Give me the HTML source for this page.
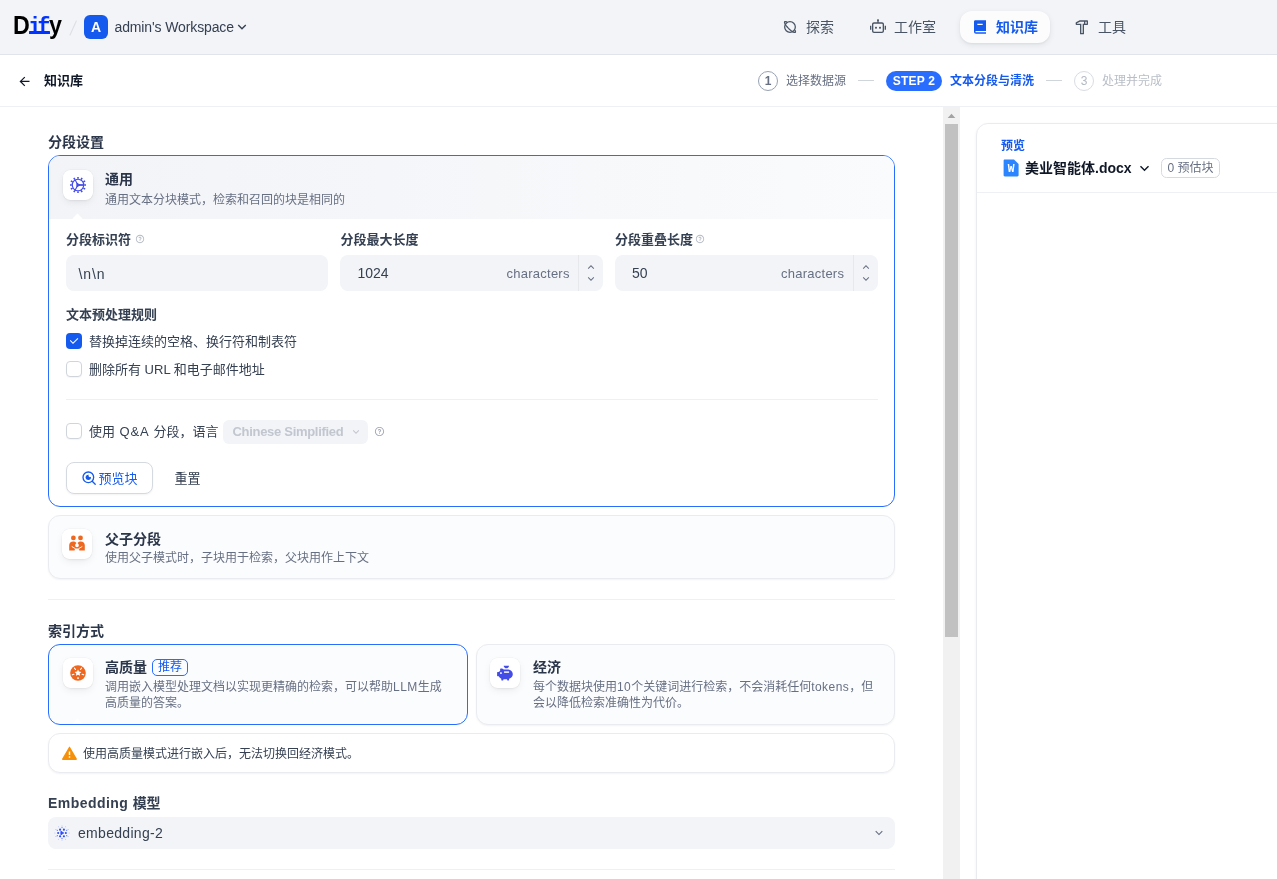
<!DOCTYPE html>
<html lang="zh-CN">
<head>
<meta charset="utf-8">
<title>Dify</title>
<style>
*{box-sizing:border-box;margin:0;padding:0}
html,body{width:1277px;height:879px;overflow:hidden;background:#fff}
body{font-family:"Liberation Sans","Noto Sans CJK SC",sans-serif;color:#101828;position:relative;-webkit-font-smoothing:antialiased}
.abs{position:absolute}
.t{position:absolute;white-space:nowrap}
svg{display:block;position:absolute}
/* header */
#hdr{left:0;top:0;width:1277px;height:55px;background:#f2f4f7;border-bottom:1px solid #e1e4ea}
#sub{left:0;top:55px;width:1277px;height:52px;background:#fff;border-bottom:1px solid #eef0f3}
.logo{left:13px;top:8.500px;height:32px;line-height:32px;font-size:25px;font-weight:700;color:#000;transform:scaleX(.93);transform-origin:0 0}
.logo .if{font-family:"Liberation Mono",monospace;color:#0033ff;font-size:23px;letter-spacing:-3.7px;margin:0 2.2px 0 -1.8px}
.avatar{left:84px;top:15px;width:24px;height:24px;border-radius:6px;background:#155aef;color:#fff;font-size:14px;font-weight:700;line-height:24px;text-align:center}
.nav{font-size:14px;line-height:20px;color:#495464;top:17px}
.pill{left:960px;top:11px;width:90px;height:32px;border-radius:12px;background:#fcfcfd;box-shadow:0 2px 6px rgba(16,24,40,.08),0 1px 2px rgba(16,24,40,.05)}
/* stepper */
.circ{width:20px;height:20px;border-radius:50%;border:1px solid #98a2b2;font-size:12px;font-weight:700;line-height:18px;text-align:center;top:71px}
.st{font-size:12px;line-height:20px;top:71px}
.dash{height:1px;width:16px;top:80px;background:#d0d5dc}
/* cards */
.card{border-radius:12px}
.ibox{width:30px;height:30px;border-radius:7.500px;background:#fff;box-shadow:0 0 0 .5px rgba(16,24,40,.05),0 3px 10px -2px rgba(9,9,11,.09),0 2px 4px -2px rgba(9,9,11,.07)}
.h14{font-size:14px;font-weight:700;line-height:20px;color:#2b364a}
.d12{font-size:12px;line-height:16px;color:#676f83}
.lab{font-size:13px;font-weight:700;line-height:16px;color:#354052}
.inp{height:36px;border-radius:8px;background:#f2f4f7}
.cb{width:16px;height:16px;border-radius:4px;left:66px}
.cb.off{background:#fff;border:1px solid #d0d5dc;box-shadow:0 1px 1px rgba(16,24,40,.04)}
.cb.on{background:#155aef}
.cl{font-size:13px;line-height:20px;color:#354052;left:89px}
.hr{height:1px;background:#eef0f3}
</style>
</head>
<body>
<div id="root" style="position:absolute;left:0;top:0;width:1277px;height:879px;will-change:transform;overflow:hidden">
<!-- ============ HEADER ============ -->
<div id="hdr" class="abs"></div>
<div id="sub" class="abs"></div>

<div class="t logo">D<span class="if">if</span>y</div>
<div class="abs" style="left:29px;top:31px;width:20.500px;height:2.500px;background:#0033ff;border-radius:.5px"></div>
<svg style="left:68px;top:19px" width="10" height="18" viewBox="0 0 10 18"><path d="M8.3 2L2 16" stroke="#dcdfe5" stroke-width="1.1" stroke-linecap="round" fill="none"/></svg>
<div class="abs avatar">A</div>
<div class="t" style="left:114.500px;top:17px;font-size:14px;line-height:20px;color:#354052;letter-spacing:-.12px">admin's Workspace</div>
<svg style="left:234px;top:19px" width="16" height="16" viewBox="0 0 24 24"><path fill="#354052" d="M11.9999 13.1714L16.9497 8.22168L18.3639 9.63589L11.9999 15.9999L5.63599 9.63589L7.0502 8.22168L11.9999 13.1714Z"/></svg>

<!-- nav -->
<div class="abs pill"></div>
<svg id="ic-explore" style="left:782px;top:18.600px" width="16" height="16" viewBox="0 0 24 24" fill="none" stroke="#495464" stroke-width="1.900" stroke-linejoin="round" stroke-linecap="round"><circle cx="12" cy="12" r="8"/><path d="M19.65 17.16 L19.92 17.80 L20.10 18.37 L20.19 18.88 L20.19 19.31 L20.10 19.65 L19.92 19.92 L19.65 20.10 L19.31 20.19 L18.88 20.19 L18.37 20.10 L17.80 19.92 L17.16 19.65 L16.47 19.30 L15.72 18.88 L14.94 18.37 L14.12 17.80 L13.28 17.16 L12.43 16.46 L11.57 15.72 L10.72 14.94 L9.88 14.12 L9.06 13.28 L8.28 12.43 L7.54 11.57 L6.84 10.72 L6.20 9.88 L5.63 9.06 L5.12 8.28 L4.70 7.53 L4.35 6.84 L4.08 6.20 L3.90 5.63 L3.81 5.12 L3.81 4.69 L3.90 4.35 L4.08 4.08 L4.35 3.90 L4.69 3.81 L5.12 3.81 L5.63 3.90 L6.20 4.08 L6.84 4.35"/></svg>
<div class="t nav" style="left:806px">探索</div>
<svg id="ic-robot" style="left:870px;top:18.800px" width="16" height="16" viewBox="0 0 24 24"><path fill="#495464" d="M13.5 2C13.5 2.44425 13.3069 2.84339 13 3.11805V5H18C19.6569 5 21 6.34315 21 8V18C21 19.6569 19.6569 21 18 21H6C4.34315 21 3 19.6569 3 18V8C3 6.34315 4.34315 5 6 5H11V3.11805C10.6931 2.84339 10.5 2.44425 10.5 2C10.5 1.17157 11.1716 0.5 12 0.5C12.8284 0.5 13.5 1.17157 13.5 2ZM6 7C5.44772 7 5 7.44772 5 8V18C5 18.5523 5.44772 19 6 19H18C18.5523 19 19 18.5523 19 18V8C19 7.44772 18.5523 7 18 7H13H11H6ZM2 10H0V16H2V10ZM22 10H24V16H22V10ZM9 14.5C9.82843 14.5 10.5 13.8284 10.5 13C10.5 12.1716 9.82843 11.5 9 11.5C8.17157 11.5 7.5 12.1716 7.5 13C7.5 13.8284 8.17157 14.5 9 14.5ZM15 14.5C15.8284 14.5 16.5 13.8284 16.5 13C16.5 12.1716 15.8284 11.5 15 11.5C14.1716 11.5 13.5 12.1716 13.5 13C13.5 13.8284 14.1716 14.5 15 14.5Z"/></svg>
<div class="t nav" style="left:894px">工作室</div>
<svg id="ic-book" style="left:972px;top:19px" width="16" height="16" viewBox="0 0 24 24"><path fill="#155aef" d="M21 18H6C5.44772 18 5 18.4477 5 19C5 19.5523 5.44772 20 6 20H21V22H6C4.34315 22 3 20.6569 3 19V4C3 2.89543 3.89543 2 5 2H21V18ZM16 9V7H8V9H16Z"/></svg>
<div class="t nav" style="left:996px;color:#155aef;font-weight:700">知识库</div>
<svg id="ic-hammer" style="left:1074px;top:19px" width="16" height="16" viewBox="0 0 24 24"><path fill="#495464" d="M20 2C20.5523 2 21 2.44772 21 3V8C21 8.55228 20.5523 9 20 9H15V22C15 22.5523 14.5523 23 14 23H10C9.44772 23 9 22.5523 9 22V9H3.5C2.94772 9 2.5 8.55228 2.5 8V5.61803C2.5 5.23926 2.714 4.893 3.05279 4.72361L8.5 2H20ZM15 4H8.97214L4.5 6.23607V7H11V21H13V7H15V4ZM19 4H17V7H19V4Z"/></svg>
<div class="t nav" style="left:1098px">工具</div>

<!-- sub header -->
<svg style="left:16.500px;top:74px" width="15" height="15" viewBox="0 0 24 24"><path fill="#101828" d="M7.82843 10.9999H20V12.9999H7.82843L13.1924 18.3638L11.7782 19.778L4 11.9999L11.7782 4.22168L13.1924 5.63589L7.82843 10.9999Z"/></svg>
<div class="t" style="left:44px;top:71px;font-size:13px;font-weight:700;line-height:20px;color:#101828">知识库</div>

<div class="abs circ" style="left:758px;color:#676f83">1</div>
<div class="t st" style="left:786px;color:#676f83">选择数据源</div>
<div class="abs dash" style="left:858px"></div>
<div class="abs" style="left:886px;top:71px;width:56px;height:20px;border-radius:10px;background:#296dff;color:#fff;font-size:12px;font-weight:700;line-height:20px;text-align:center;letter-spacing:.2px">STEP 2</div>
<div class="t st" style="left:950px;color:#155aef;font-weight:700">文本分段与清洗</div>
<div class="abs dash" style="left:1046px"></div>
<div class="abs circ" style="left:1074px;color:#b3b8c2;border-color:#d9dce2;font-weight:400">3</div>
<div class="t st" style="left:1102px;color:#b9bec7">处理并完成</div>


<!-- ============ LEFT PANEL ============ -->
<div class="t" style="left:48px;top:131.700px;font-size:14px;font-weight:700;line-height:20px;color:#2b364a">分段设置</div>

<!-- general card -->
<div class="abs card" id="c1" style="left:48px;top:155px;width:847px;height:352px;border:1.500px solid #296dff;background:#fff;overflow:hidden">
  <div class="abs" style="left:0;top:0;width:100%;height:62.500px;background:linear-gradient(90deg,#f2f4f7 0%,#f5f6f9 40%,#fafbfc 100%)"></div>
  <div class="abs" style="left:24.800px;top:59px;width:7px;height:7px;background:#fff;transform:rotate(45deg)"></div>
</div>
<div class="abs ibox" style="left:63px;top:170px"></div>
<svg id="ic-general" style="left:70px;top:176.800px" width="16" height="16" viewBox="0 0 16 16" fill="none" stroke="#444ce7">
  <circle cx="8" cy="8" r="5.750" stroke-width="1.200"/>
  <path d="M14.20 8.00L16.25 8.00M13.37 11.10L15.14 12.12M11.10 13.37L12.12 15.14M8.00 14.20L8.00 16.25M4.90 13.37L3.88 15.14M2.63 11.10L0.86 12.12M1.80 8.00L-0.25 8.00M2.63 4.90L0.86 3.87M4.90 2.63L3.87 0.86M8.00 1.80L8.00 -0.25M11.10 2.63L12.12 0.86M13.37 4.90L15.14 3.87" stroke-width="1.550"/>
  <path d="M8 8L13.70 8.00M8 8L5.15 12.94M8 8L5.15 3.06" stroke-width="1.150"/>
  <path d="M6.900 6.200L10 8L6.900 9.800Z" fill="#444ce7" stroke-width="1" stroke-linejoin="round"/><path d="M9 8H13.700" stroke-width="1.500"/>
</svg>
<div class="t h14" style="left:105px;top:169px">通用</div>
<div class="t d12" style="left:105px;top:192px">通用文本分块模式，检索和召回的块是相同的</div>

<div class="t lab" style="left:66px;top:231.700px">分段标识符</div>
<svg class="q" style="left:135px;top:234px" width="10" height="10" viewBox="0 0 24 24"><path fill="#b4b9c4" d="M12 22C6.47715 22 2 17.5228 2 12C2 6.47715 6.47715 2 12 2C17.5228 2 22 6.47715 22 12C22 17.5228 17.5228 22 12 22ZM12 20C16.4183 20 20 16.4183 20 12C20 7.58172 16.4183 4 12 4C7.58172 4 4 7.58172 4 12C4 16.4183 7.58172 20 12 20ZM11 15H13V17H11V15ZM13 13.3551V14H11V12.5C11 11.9477 11.4477 11.5 12 11.5C12.8284 11.5 13.5 10.8284 13.5 10C13.5 9.17157 12.8284 8.5 12 8.5C11.2723 8.5 10.6656 9.01823 10.5288 9.70577L8.56731 9.31346C8.88637 7.70919 10.302 6.5 12 6.500C13.933 6.500 15.500 8.067 15.500 10C15.500 11.5855 14.4457 12.9248 13 13.3551Z"/></svg>
<div class="t lab" style="left:340.500px;top:231.700px">分段最大长度</div>
<div class="t lab" style="left:615px;top:231.700px">分段重叠长度</div>
<svg class="q" style="left:695px;top:234px" width="10" height="10" viewBox="0 0 24 24"><path fill="#b4b9c4" d="M12 22C6.47715 22 2 17.5228 2 12C2 6.47715 6.47715 2 12 2C17.5228 2 22 6.47715 22 12C22 17.5228 17.5228 22 12 22ZM12 20C16.4183 20 20 16.4183 20 12C20 7.58172 16.4183 4 12 4C7.58172 4 4 7.58172 4 12C4 16.4183 7.58172 20 12 20ZM11 15H13V17H11V15ZM13 13.3551V14H11V12.5C11 11.9477 11.4477 11.5 12 11.5C12.8284 11.5 13.5 10.8284 13.5 10C13.5 9.17157 12.8284 8.5 12 8.5C11.2723 8.5 10.6656 9.01823 10.5288 9.70577L8.56731 9.31346C8.88637 7.70919 10.302 6.5 12 6.500C13.933 6.500 15.500 8.067 15.500 10C15.500 11.5855 14.4457 12.9248 13 13.3551Z"/></svg>

<div class="abs inp" style="left:66px;top:255px;width:262px"></div>
<div class="t" style="left:78.500px;top:264px;font-size:14px;line-height:20px;color:#354052;letter-spacing:.9px">\n\n</div>

<div class="abs inp" style="left:340px;top:255px;width:263px"></div>
<div class="t" style="left:357.500px;top:262.600px;font-size:14px;line-height:20px;color:#354052">1024</div>
<div class="t" style="left:506.500px;top:263.800px;font-size:13px;line-height:20px;color:#676f83;letter-spacing:.25px">characters</div>
<div class="abs" style="left:578px;top:255px;width:1px;height:36px;background:#e6e8ec"></div>
<svg style="left:585px;top:261px" width="12" height="12" viewBox="0 0 24 24"><path fill="#676f83" d="M11.9999 10.8284L7.0502 15.7782L5.63599 14.364L11.9999 8L18.3639 14.364L16.9497 15.7782L11.9999 10.8284Z"/></svg>
<svg style="left:585px;top:272.800px" width="12" height="12" viewBox="0 0 24 24"><path fill="#676f83" d="M11.9999 13.1714L16.9497 8.22168L18.3639 9.63589L11.9999 15.9999L5.63599 9.63589L7.0502 8.22168L11.9999 13.1714Z"/></svg>

<div class="abs inp" style="left:615px;top:255px;width:263px"></div>
<div class="t" style="left:632px;top:262.600px;font-size:14px;line-height:20px;color:#354052">50</div>
<div class="t" style="left:781px;top:263.800px;font-size:13px;line-height:20px;color:#676f83;letter-spacing:.25px">characters</div>
<div class="abs" style="left:853px;top:255px;width:1px;height:36px;background:#e6e8ec"></div>
<svg style="left:860px;top:261px" width="12" height="12" viewBox="0 0 24 24"><path fill="#676f83" d="M11.9999 10.8284L7.0502 15.7782L5.63599 14.364L11.9999 8L18.3639 14.364L16.9497 15.7782L11.9999 10.8284Z"/></svg>
<svg style="left:860px;top:272.800px" width="12" height="12" viewBox="0 0 24 24"><path fill="#676f83" d="M11.9999 13.1714L16.9497 8.22168L18.3639 9.63589L11.9999 15.9999L5.63599 9.63589L7.0502 8.22168L11.9999 13.1714Z"/></svg>

<div class="t lab" style="left:66px;top:307px">文本预处理规则</div>
<div class="abs cb on" style="top:333px"></div>
<svg style="left:68px;top:335px" width="12" height="12" viewBox="0 0 24 24"><path fill="#fff" d="M9.9997 15.1709L19.1921 5.97852L20.6063 7.39273L9.9997 17.9993L3.63574 11.6354L5.04996 10.2212L9.9997 15.1709Z"/></svg>
<div class="t cl" style="top:331.500px">替换掉连续的空格、换行符和制表符</div>
<div class="abs cb off" style="top:361px"></div>
<div class="t cl" style="top:359.500px">删除所有 URL 和电子邮件地址</div>
<div class="abs hr" style="left:66px;top:399px;width:812px"></div>

<div class="abs cb off" style="top:423px"></div>
<div class="t cl" style="top:421.500px">使用<span style="letter-spacing:.9px"> Q&amp;A </span>分段，语言</div>
<div class="abs" style="left:223px;top:420px;width:145px;height:23.500px;border-radius:6px;background:#f2f4f7"></div>
<div class="t" style="left:232.500px;top:422px;font-size:13px;font-weight:700;line-height:20px;color:#c2c6cf;letter-spacing:-.3px">Chinese Simplified</div>
<svg style="left:349.500px;top:425.500px" width="12" height="12" viewBox="0 0 24 24"><path fill="#c2c6cf" d="M11.9999 13.1714L16.9497 8.22168L18.3639 9.63589L11.9999 15.9999L5.63599 9.63589L7.0502 8.22168L11.9999 13.1714Z"/></svg>
<svg class="q" style="left:373.500px;top:426px" width="11" height="11" viewBox="0 0 24 24"><path fill="#a3a9b6" d="M12 22C6.47715 22 2 17.5228 2 12C2 6.47715 6.47715 2 12 2C17.5228 2 22 6.47715 22 12C22 17.5228 17.5228 22 12 22ZM12 20C16.4183 20 20 16.4183 20 12C20 7.58172 16.4183 4 12 4C7.58172 4 4 7.58172 4 12C4 16.4183 7.58172 20 12 20ZM11 15H13V17H11V15ZM13 13.3551V14H11V12.5C11 11.9477 11.4477 11.5 12 11.5C12.8284 11.5 13.5 10.8284 13.5 10C13.5 9.17157 12.8284 8.5 12 8.5C11.2723 8.5 10.6656 9.01823 10.5288 9.70577L8.56731 9.31346C8.88637 7.70919 10.302 6.5 12 6.500C13.933 6.500 15.500 8.067 15.500 10C15.500 11.5855 14.4457 12.9248 13 13.3551Z"/></svg>

<div class="abs" style="left:66px;top:462px;width:87px;height:32px;border-radius:8px;background:#fff;border:1px solid #d5d9e0;box-shadow:0 1px 2px rgba(9,9,11,.05)"></div>
<svg id="ic-searcheye" style="left:81px;top:470px" width="16" height="16" viewBox="0 0 24 24" fill="none" stroke="#155aef" stroke-width="2"><circle cx="11" cy="11" r="8"/><path d="M16.800 16.800L21.300 21.300" stroke-linecap="round"/><circle cx="11" cy="11" r="4" fill="#155aef" stroke="none"/><circle cx="13.600" cy="8.400" r="2.300" fill="#fff" stroke="none"/></svg>
<div class="t" style="left:98.500px;top:468.500px;font-size:13px;line-height:20px;color:#155aef">预览块</div>
<div class="t" style="left:174.500px;top:468.500px;font-size:13px;line-height:20px;color:#354052">重置</div>

<!-- parent-child card -->
<div class="abs card" style="left:48px;top:515px;width:847px;height:63.500px;background:#fbfcfd;border:1px solid #e9ebf0;box-shadow:0 1px 2px rgba(9,9,11,.05)"></div>
<div class="abs ibox" style="left:62px;top:528.500px"></div>
<svg id="ic-family" style="left:69px;top:534.700px" width="16" height="16" viewBox="0 0 16 16" fill="#ef6820">
  <circle cx="4.400" cy="2.900" r="2.400"/><circle cx="11.500" cy="2.900" r="2.400"/>
  <path d="M.2 15.400V10.300C.2 7.900 1.900 6.500 4.100 6.500C5.500 6.500 6.500 7 7.200 7.700L8 8.400L8.800 7.700C9.500 7 10.500 6.500 11.900 6.500C14.100 6.500 15.800 7.900 15.800 10.300V15.400H10.300L10.300 14.600L8 13.300L5.700 14.600V15.400Z"/>
  <path d="M8 7.600C8.600 8.500 9.900 9.100 9.900 10.300A1.900 1.900 0 0 1 6.100 10.300C6.100 9.100 7.400 8.500 8 7.600Z" fill="#fff"/>
  <path d="M3.100 11.700L6.400 13.700M12.900 11.700L9.600 13.700" stroke="#fff" stroke-width=".95" stroke-linecap="round" fill="none"/>
</svg>
<div class="t h14" style="left:105px;top:528.800px">父子分段</div>
<div class="t d12" style="left:105px;top:550px">使用父子模式时，子块用于检索，父块用作上下文</div>

<div class="abs hr" style="left:48px;top:599px;width:847px"></div>

<div class="t" style="left:48px;top:620.600px;font-size:14px;font-weight:700;line-height:20px;color:#2b364a">索引方式</div>

<!-- high quality -->
<div class="abs card" style="left:48px;top:644px;width:420px;height:81px;background:#fbfcfd;border:1.500px solid #296dff;overflow:hidden"><div class="abs" style="left:24.600px;top:74.500px;width:7px;height:7px;background:#fff;transform:rotate(45deg)"></div></div>
<div class="abs ibox" style="left:63px;top:657.500px"></div>
<svg id="ic-hq" style="left:70px;top:664.800px" width="16" height="16" viewBox="0 0 16 16">
  <circle cx="8" cy="8" r="7.800" fill="#ef6820"/>
  <path fill="#fff" d="M8.00 4.45L9.03 6.58L11.38 6.90L9.66 8.54L10.09 10.87L8.00 9.75L5.91 10.87L6.34 8.54L4.62 6.90L6.97 6.58Z"/>
  <path d="M10.53 4.52L11.53 3.15M12.09 9.33L13.71 9.85M3.91 9.33L2.29 9.85M5.47 4.52L4.47 3.15" stroke="#fff" stroke-width="1.100" stroke-linecap="round" fill="none"/>
  <path d="M8 12.300V14" stroke="#fff" stroke-width="1.500" fill="none"/>
</svg>
<div class="t h14" style="left:105px;top:657px">高质量</div>
<div class="abs" style="left:152px;top:659px;width:36px;height:16.500px;border-radius:5px;border:1px solid #296dff;color:#155aef;font-size:12px;line-height:14.500px;text-align:center">推荐</div>
<div class="t d12" style="left:105px;top:679px">调用嵌入模型处理文档以实现更精确的检索，可以帮助<span style="letter-spacing:.5px">LLM</span>生成<br>高质量的答案。</div>

<!-- economy -->
<div class="abs card" style="left:476px;top:644px;width:419px;height:81px;background:#fbfcfd;border:1px solid #e9ebf0;box-shadow:0 1px 2px rgba(9,9,11,.05)"></div>
<div class="abs ibox" style="left:490px;top:657.500px"></div>
<svg id="ic-pig" style="left:497px;top:665px" width="16" height="16" viewBox="0 0 16 16" fill="#444ce7">
  <path d="M6.700.65H12C12 2.100 10.800 3.250 9.350 3.250S6.700 2.100 6.700.65Z"/>
  <path d="M3.100 4.200C3.100 3.800 3.400 3.600 3.800 3.600H4.600C5.400 3.600 6.100 3.900 6.700 4.400H10.200C13.400 4.400 15.800 6.400 15.800 9.200C15.800 11.200 14.400 12.900 12.100 13.800V15C12.100 15.300 11.900 15.500 11.600 15.500H10.600C10.300 15.500 10.100 15.300 10.100 15V14.300H6.400V15C6.400 15.300 6.200 15.500 5.900 15.500H4.800C4.500 15.500 4.300 15.300 4.300 15V13.700C3.200 13.100 2.300 12.300 1.700 11.200H.6C.3 11.200.1 11 .1 10.700V7.600C.1 7.300.3 7.100.6 7.100H1.600C2 6.700 2.500 6.400 3.100 6.100Z"/>
  <rect x="7" y="6.150" width="5.100" height="1.750" rx=".35" fill="#e0e2fb"/>
  <rect x="3.100" y="7.200" width="1.700" height="1.700" rx=".35" fill="#fff"/>
</svg>
<div class="t h14" style="left:533px;top:657px">经济</div>
<div class="t d12" style="left:533px;top:679px">每个数据块使用<span style="letter-spacing:.4px">10</span>个关键词进行检索，不会消耗任何<span style="letter-spacing:.45px">tokens</span>，但<br>会以降低检索准确性为代价。</div>

<!-- warning -->
<div class="abs card" style="left:48px;top:733px;width:847px;height:39.500px;background:#fff;border:1px solid #e9ebf0;box-shadow:0 1px 2px rgba(9,9,11,.05)"></div>
<svg style="left:60.500px;top:744.500px" width="17" height="17" viewBox="0 0 24 24"><path fill="#f79009" d="M12.8659 3.00017L22.3922 19.5002C22.6684 19.9785 22.5045 20.5901 22.0262 20.8662C21.8742 20.954 21.7017 21.0002 21.5262 21.0002H2.47363C1.92135 21.0002 1.47363 20.5525 1.47363 20.0002C1.47363 19.8246 1.51984 19.6522 1.60761 19.5002L11.1339 3.00017C11.41 2.52187 12.0216 2.358 12.4999 2.63414C12.6519 2.72191 12.7782 2.84815 12.8659 3.00017ZM10.9999 16.0002V18.0002H12.9999V16.0002H10.9999ZM10.9999 9.00017V14.0002H12.9999V9.00017H10.9999Z"/></svg>
<div class="t" style="left:83px;top:745.500px;font-size:12px;line-height:16px;color:#354052">使用高质量模式进行嵌入后，无法切换回经济模式。</div>

<div class="t" style="left:48px;top:793px;font-size:14px;font-weight:700;line-height:20px;color:#354052"><span style="letter-spacing:.45px">Embedding </span>模型</div>
<div class="abs" style="left:48px;top:817px;width:847px;height:32px;border-radius:8px;background:#f2f4f7"></div>
<svg id="ic-zhipu" style="left:54px;top:825px" width="16" height="16" viewBox="0 0 16 16" fill="#2b4bff"><path d="M6.900 6.300L9.700 8L6.900 9.700Z" stroke="#2b4bff" stroke-width=".9" stroke-linejoin="round"/><circle cx="11.85" cy="8.00" r="1.050"/><circle cx="9.93" cy="11.33" r="1.050"/><circle cx="6.08" cy="11.33" r="1.050"/><circle cx="4.15" cy="8.00" r="1.050"/><circle cx="6.07" cy="4.67" r="1.050"/><circle cx="9.93" cy="4.67" r="1.050"/><circle cx="12.68" cy="10.70" r=".62" opacity=".75"/><circle cx="8.00" cy="13.40" r=".62" opacity=".75"/><circle cx="3.32" cy="10.70" r=".62" opacity=".75"/><circle cx="3.32" cy="5.30" r=".62" opacity=".75"/><circle cx="8.00" cy="2.60" r=".62" opacity=".75"/><circle cx="12.68" cy="5.30" r=".62" opacity=".75"/><circle cx="15.10" cy="8.00" r=".5" opacity=".3"/><circle cx="14.06" cy="11.50" r=".5" opacity=".4"/><circle cx="11.55" cy="14.15" r=".5" opacity=".3"/><circle cx="8.00" cy="15.00" r=".5" opacity=".4"/><circle cx="4.45" cy="14.15" r=".5" opacity=".3"/><circle cx="1.94" cy="11.50" r=".5" opacity=".4"/><circle cx="0.90" cy="8.00" r=".5" opacity=".3"/><circle cx="1.94" cy="4.50" r=".5" opacity=".4"/><circle cx="4.45" cy="1.85" r=".5" opacity=".3"/><circle cx="8.00" cy="1.00" r=".5" opacity=".4"/><circle cx="11.55" cy="1.85" r=".5" opacity=".3"/><circle cx="14.06" cy="4.50" r=".5" opacity=".4"/></svg>
<div class="t" style="left:78px;top:823.200px;font-size:14px;line-height:20px;color:#354052;letter-spacing:.3px">embedding-2</div>
<svg style="left:872px;top:826px" width="14" height="14" viewBox="0 0 24 24"><path fill="#676f83" d="M11.9999 13.1714L16.9497 8.22168L18.3639 9.63589L11.9999 15.9999L5.63599 9.63589L7.0502 8.22168L11.9999 13.1714Z"/></svg>
<div class="abs hr" style="left:48px;top:869px;width:847px"></div>

<!-- scrollbar -->
<div class="abs" style="left:943px;top:107px;width:17px;height:772px;background:#f1f1f1"></div>
<div class="abs" style="left:945px;top:124px;width:13px;height:512.700px;background:#c1c1c1"></div>
<svg style="left:947px;top:113px" width="9" height="6" viewBox="0 0 9 6"><path d="M4.500 0.800L8.300 5H.7Z" fill="#a3a3a3"/></svg>



<!-- ============ RIGHT PANEL ============ -->
<div class="abs" style="left:976px;top:123px;width:340px;height:800px;border:1px solid #e9ebf0;border-radius:12px;background:#fff;box-shadow:0 1px 3px rgba(9,9,11,.06)"></div>
<div class="t" style="left:1001px;top:137.500px;font-size:12px;font-weight:700;line-height:16px;color:#155aef">预览</div>
<svg id="ic-doc" style="left:1003px;top:159px" width="17" height="18" viewBox="0 0 17 18"><path d="M1.800.5H11L15.600 5.100V16.200C15.600 16.900 15.100 17.400 14.400 17.400H1.800C1.100 17.400.6 16.900.6 16.200V1.700C.6 1 1.100.5 1.800.5Z" fill="#2a85ff"/><text x="0" y="0" transform="translate(8.050 12.800) scale(1.120 1)" font-family="DejaVu Sans Mono, Liberation Mono, monospace" font-size="10" font-weight="700" fill="#fff" text-anchor="middle">W</text></svg>
<div class="t" style="left:1025px;top:158px;font-size:14px;font-weight:700;line-height:20px;color:#101828">美业智能体.docx</div>
<svg style="left:1135.500px;top:159.500px" width="17" height="17" viewBox="0 0 24 24"><path fill="#101828" d="M11.9999 13.1714L16.9497 8.22168L18.3639 9.63589L11.9999 15.9999L5.63599 9.63589L7.0502 8.22168L11.9999 13.1714Z"/></svg>
<div class="abs" style="left:1161px;top:158px;width:59px;height:19.500px;border-radius:5.500px;border:1px solid #d5d9e0;font-size:12px;line-height:18.800px;text-align:center;color:#676f83;white-space:nowrap">0 预估块</div>
<div class="abs" style="left:977px;top:192px;width:300px;height:1px;background:#eef0f3"></div>

</div>
</body>
</html>
